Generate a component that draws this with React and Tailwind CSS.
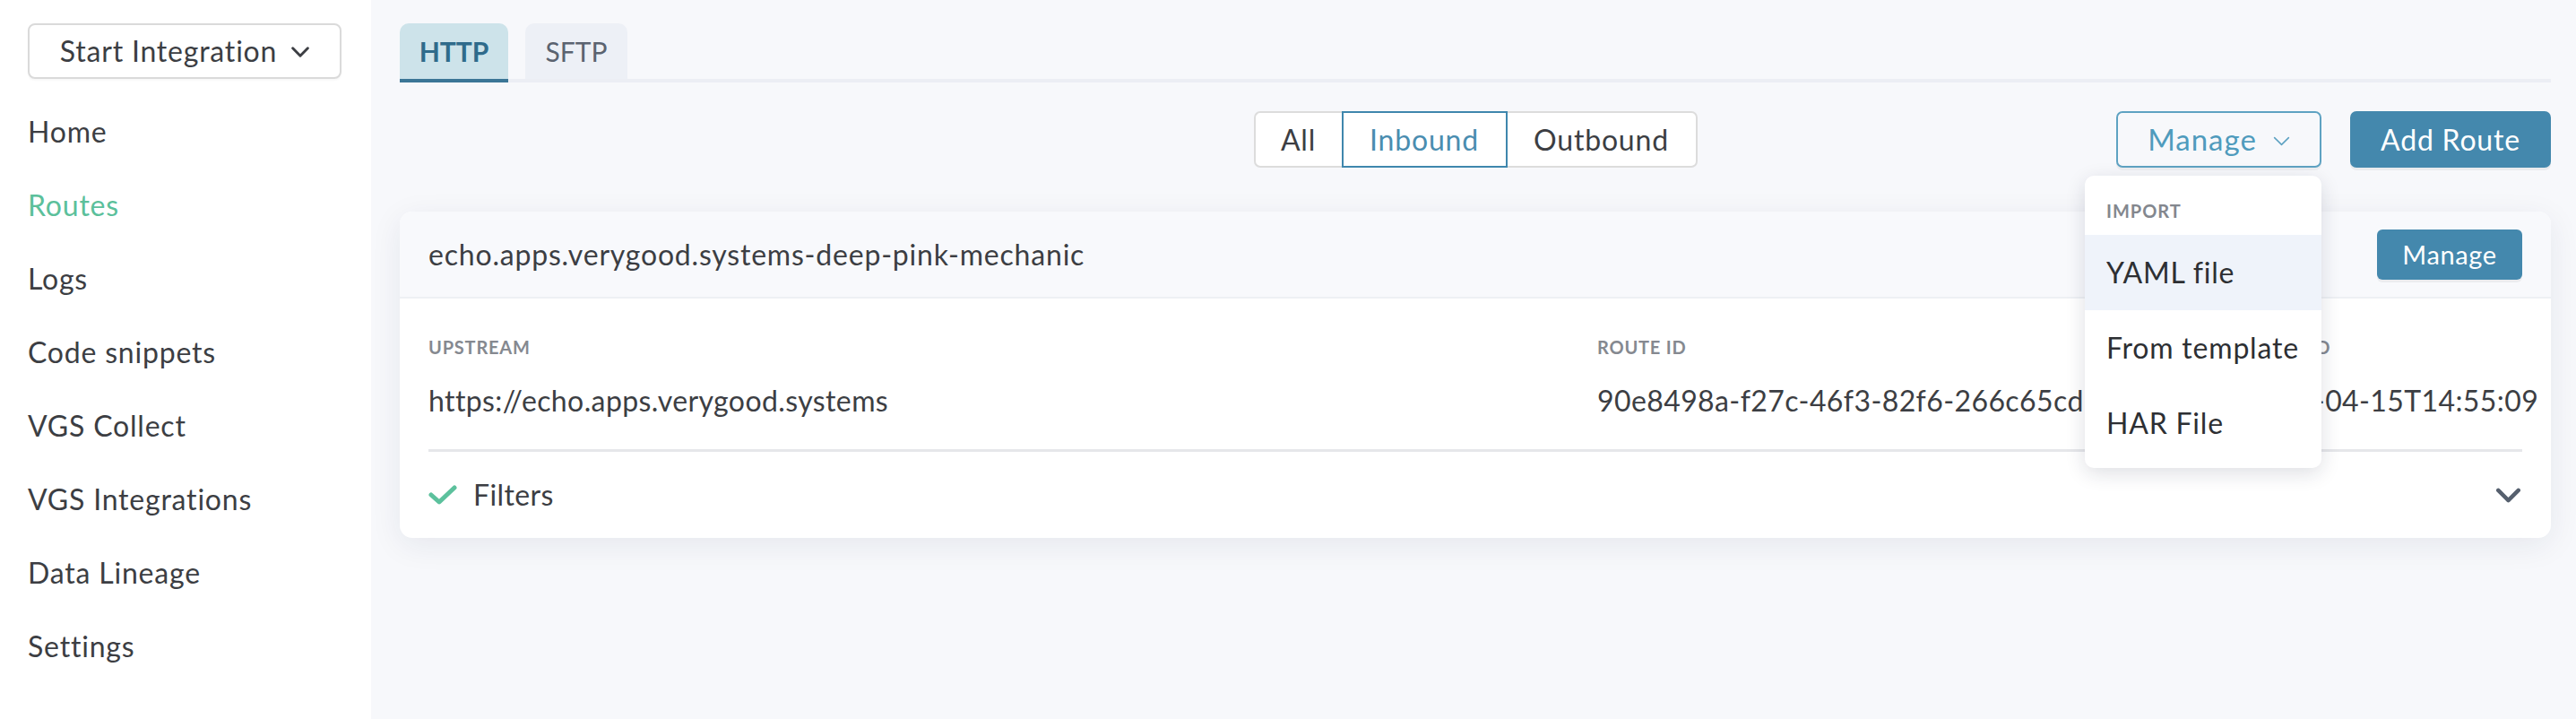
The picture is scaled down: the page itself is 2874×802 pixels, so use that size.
import React from 'react';

const font = { fontFamily: 'Lato, "Open Sans", sans-serif' };

const navItems = ['Home', 'Routes', 'Logs', 'Code snippets', 'VGS Collect', 'VGS Integrations', 'Data Lineage', 'Settings'];

function Chevron({ className, strokeWidth = 3 }) {
  return (
    <svg viewBox="0 0 24 14" fill="none" className={className}>
      <polyline points="2,2 12,12 22,2" stroke="currentColor" strokeWidth={strokeWidth} strokeLinecap="round" strokeLinejoin="round" />
    </svg>
  );
}

function Sidebar() {
  return (
    <aside className="w-[414px] shrink-0 bg-white px-[31px] pt-[26px]">
      <button className="flex h-[62px] w-[350px] items-center justify-center gap-[16px] rounded-[8px] border-2 border-[#dadada] bg-white text-[32px] tracking-[0.8px] text-[#3c3e43] shadow-[0_2px_2px_rgba(0,0,0,0.03)]">
        <span>Start Integration</span>
        <Chevron className="mt-[2px] h-[12px] w-[20px] text-[#3c3e43]" strokeWidth={3.5} />
      </button>
      <nav className="mt-[18px] flex flex-col">
        {navItems.map((item) => (
          <div
            key={item}
            className={`flex h-[82px] items-center text-[32px] tracking-[0.8px] ${item === 'Routes' ? 'text-[#5bc09b]' : 'text-[#3c3e43]'}`}
          >
            {item}
          </div>
        ))}
      </nav>
    </aside>
  );
}

function Tabs() {
  return (
    <div className="flex gap-[19px] border-b-4 border-[#eceef4]">
      <div className="-mb-[4px] flex h-[66px] w-[121px] items-center justify-center rounded-t-[10px] border-b-4 border-[#3b7696] bg-[#cde3ea] text-[30px] font-bold text-[#2f6b8b]">
        HTTP
      </div>
      <div className="flex h-[62px] w-[114px] items-center justify-center rounded-t-[10px] bg-[#edf0f6] text-[30px] text-[#5b6370]">
        SFTP
      </div>
    </div>
  );
}

function ManageMenu() {
  return (
    <div className="absolute right-0 top-[72px] z-10 w-[264px] rounded-[10px] bg-white pb-[8px] shadow-[0_6px_22px_rgba(20,30,60,0.14)]">
      <div className="h-[66px] px-[24px] pt-[29px] text-[20px] font-bold leading-[20px] tracking-[1px] text-[#83878e]">IMPORT</div>
      <div className="flex h-[84px] items-center bg-[#eff3fa] px-[24px] text-[32px] tracking-[0.8px] text-[#2d2f33]">YAML file</div>
      <div className="flex h-[84px] items-center px-[24px] text-[32px] tracking-[0.8px] text-[#2d2f33]">From template</div>
      <div className="flex h-[84px] items-center px-[24px] text-[32px] tracking-[0.8px] text-[#2d2f33]">HAR File</div>
    </div>
  );
}

function Toolbar() {
  return (
    <div className="mt-[32px] grid grid-cols-[1fr_auto_1fr] items-center">
      <div />
      <div className="flex h-[63px] text-[32px] tracking-[0.8px]">
        <div className="flex w-[98px] items-center justify-center rounded-l-[7px] border-2 border-r-0 border-[#dcdcdc] bg-white text-[#3c3e43]">All</div>
        <div className="flex w-[185px] items-center justify-center border-2 border-[#3f87ad] bg-white text-[#4a8db0]">Inbound</div>
        <div className="flex w-[212px] items-center justify-center rounded-r-[7px] border-2 border-l-0 border-[#dcdcdc] bg-white text-[#3c3e43]">Outbound</div>
      </div>
      <div className="flex justify-end gap-[32px]">
        <div className="relative">
          <button className="flex h-[63px] w-[229px] items-center justify-center gap-[18px] rounded-[7px] border-2 border-[#5ea2c2] bg-[#f7f8fb] text-[33px] tracking-[1px] text-[#4f9bbd] shadow-[0_3px_0_rgba(0,0,0,0.04)]">
            <span>Manage</span>
            <Chevron className="mt-[3px] h-[11px] w-[19px] text-[#5ea2c2]" strokeWidth={2} />
          </button>
          <ManageMenu />
        </div>
        <button className="h-[63px] w-[224px] rounded-[7px] bg-[#4488ad] text-[32px] tracking-[0.8px] text-white shadow-[0_3px_0_rgba(0,0,0,0.05)]">
          Add Route
        </button>
      </div>
    </div>
  );
}

function RouteCard() {
  const columns = [
    { label: 'UPSTREAM', value: 'https://echo.apps.verygood.systems' },
    { label: 'ROUTE ID', value: '90e8498a-f27c-46f3-82f6-266c65cdbf0a' },
    { label: 'CREATED', value: '2021-04-15T14:55:09' },
  ];
  return (
    <div className="mt-[49px] overflow-hidden rounded-[14px] bg-white shadow-[0_8px_34px_rgba(30,40,80,0.08)]">
      <div className="flex h-[97px] items-center justify-between border-b-2 border-[#eef0f4] bg-[#f8f9fc] px-[32px]">
        <span className="text-[32px] tracking-[0.8px] text-[#3c3e43]">echo.apps.verygood.systems-deep-pink-mechanic</span>
        <button className="h-[56px] w-[162px] rounded-[6px] bg-[#4488ad] text-[29px] tracking-[0.6px] text-white shadow-[0_3px_0_rgba(0,0,0,0.05)]">Manage</button>
      </div>
      <div className="px-[32px]">
        <div className="grid grid-cols-[1304px_724px_minmax(0,1fr)] pt-[43px]">
          {columns.map((c) => (
            <div key={c.label} className="min-w-0">
              <div className="text-[20px] font-bold leading-[22px] tracking-[0.8px] text-[#858990]">{c.label}</div>
              <div className="mt-[30px] whitespace-nowrap text-[32px] leading-[38px] tracking-[0.4px] text-[#3c3e43]">{c.value}</div>
            </div>
          ))}
        </div>
        <div className="mt-[35px] h-[3px] bg-[#e6e7ea]" />
        <div className="flex h-[96px] items-center justify-between">
          <div className="flex items-center gap-[18px]">
            <svg viewBox="0 0 32 22" className="h-[22px] w-[32px]" fill="none">
              <polyline points="3,11 12,19 29,3" stroke="#5cc19d" strokeWidth="5" strokeLinecap="round" strokeLinejoin="round" />
            </svg>
            <span className="text-[32px] tracking-[0.4px] text-[#3c3e43]">Filters</span>
          </div>
          <Chevron className="mr-[2px] h-[17px] w-[27px] text-[#56606e]" strokeWidth={4} />
        </div>
      </div>
    </div>
  );
}

export default function App() {
  return (
    <div className="flex h-[802px] w-full overflow-hidden" style={font}>
      <Sidebar />
      <main className="min-w-0 flex-1 bg-[#f7f8fb] pl-[32px] pr-[28px] pt-[26px]">
        <Tabs />
        <Toolbar />
        <RouteCard />
      </main>
    </div>
  );
}
